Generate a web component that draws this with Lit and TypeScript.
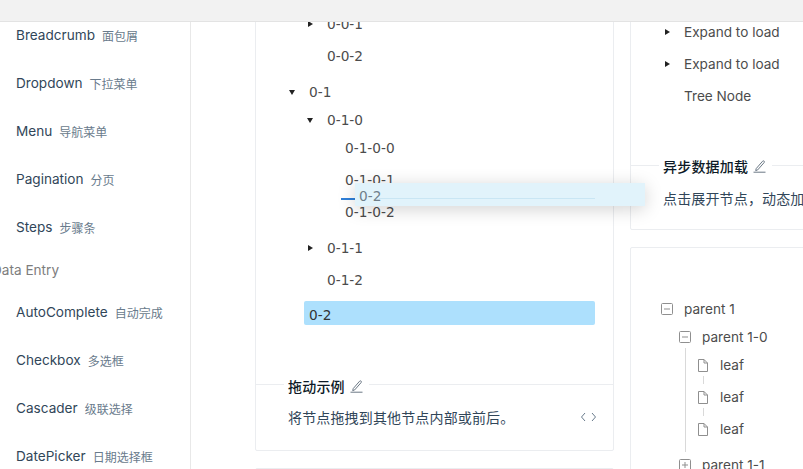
import { LitElement, css, html, svg } from "lit";
import { customElement } from "lit/decorators.js";

type TreeNode = { label: string; open?: boolean; selected?: boolean; kids?: TreeNode[]; leaf?: boolean };

const navTop = [
  ["Breadcrumb", "面包屑"],
  ["Dropdown", "下拉菜单"],
  ["Menu", "导航菜单"],
  ["Pagination", "分页"],
  ["Steps", "步骤条"],
];
const navEntry = [
  ["AutoComplete", "自动完成"],
  ["Checkbox", "多选框"],
  ["Cascader", "级联选择"],
  ["DatePicker", "日期选择框"],
];

const dragTree: TreeNode[] = [
  {
    label: "0-0",
    open: true,
    kids: [
      { label: "0-0-0" },
      { label: "0-0-1" },
      { label: "0-0-2", leaf: true },
    ],
  },
  {
    label: "0-1",
    open: true,
    kids: [
      {
        label: "0-1-0",
        open: true,
        kids: [
          { label: "0-1-0-0", leaf: true },
          { label: "0-1-0-1", leaf: true },
          { label: "0-1-0-2", leaf: true },
        ],
      },
      { label: "0-1-1" },
      { label: "0-1-2", leaf: true },
    ],
  },
  { label: "0-2", leaf: true, selected: true },
];

const asyncTree: TreeNode[] = [
  { label: "Expand to load" },
  { label: "Expand to load" },
  { label: "Tree Node", leaf: true },
];

const pencil = svg`<path d="M3.2 9.6 9.6 2.2c.5-.5 1.1-.5 1.5-.1s.4 1 0 1.5L4.7 10.9l-2 .7z" fill="none" stroke="currentColor"/><path d="M.5 13.2h12" stroke="currentColor"/>`;

@customElement("app-root")
export class AppRoot extends LitElement {
  static styles = css`
    :host {
      display: block;
      position: relative;
      width: 803px;
      height: 469px;
      overflow: hidden;
      background: #fff;
      font-family: Inter, "Noto Sans CJK SC", sans-serif;
      font-size: 13.6px;
      color: #314659;
    }
    * {
      box-sizing: border-box;
    }
    .topbar {
      height: 22px;
      background: #f2f2f2;
      border-bottom: 1px solid #e3e3e3;
      position: relative;
      z-index: 2;
    }
    .page {
      display: flex;
      height: 447px;
      overflow: hidden;
    }
    .side {
      flex: none;
      width: 191px;
      border-right: 1px solid #e8e8e8;
      margin-top: -11px;
    }
    .nav {
      display: flex;
      align-items: center;
      gap: 7px;
      height: 48px;
      padding-left: 16px;
      white-space: nowrap;
    }
    .nav small {
      font-size: 12px;
      color: #697b8c;
    }
    .group {
      height: 37px;
      line-height: 39px;
      margin-left: -8px;
      color: #7d7d7d;
    }
    .content {
      flex: none;
      display: flex;
      gap: 16px;
      padding-left: 64px;
      align-items: flex-start;
    }
    .col {
      flex: none;
      display: flex;
      flex-direction: column;
      gap: 17px;
      margin-top: -80px;
    }
    .left {
      width: 359px;
    }
    .right {
      width: 260px;
    }
    .card {
      border: 1px solid #ebedf0;
      border-radius: 2px;
    }
    .demo {
      padding: 5px 18px 52px 32px;
    }
    .async {
      padding: 73px 0 53px 32px;
    }
    .meta {
      position: relative;
      border-top: 1px solid #ebedf0;
      padding: 18px 18px 0 32px;
      height: 66px;
    }
    .right .meta {
      height: 64px;
    }
    .meta-title {
      position: absolute;
      top: -10px;
      left: 28px;
      display: flex;
      align-items: center;
      gap: 5px;
      padding: 0 6px 0 4px;
      background: #fff;
      font-family: "Noto Sans CJK SC", sans-serif;
      font-size: 14px;
      font-weight: 500;
      letter-spacing: 0.2px;
      line-height: 22px;
      color: #0d1a26;
    }
    .right .meta-title {
      top: -11px;
    }
    .meta-title svg {
      display: block;
      width: 13px;
      height: 14px;
      color: #6b7885;
    }
    .desc {
      display: flex;
      justify-content: space-between;
      align-items: center;
      font-family: "Noto Sans CJK SC", sans-serif;
      font-size: 14px;
      letter-spacing: 0.15px;
      line-height: 28px;
      white-space: nowrap;
    }
    .desc svg {
      display: block;
      width: 17px;
      height: 10px;
      color: #697b8c;
      margin-right: -2px;
    }
    ul {
      list-style: none;
      margin: 0;
      padding: 0;
    }
    ul ul {
      padding-left: 18px;
    }
    li {
      position: relative;
      padding: 4px 0;
    }
    .row {
      display: flex;
      height: 24px;
      align-items: center;
    }
    .sw {
      flex: none;
      width: 16px;
      display: flex;
      align-items: center;
    }
    .arrow-r {
      margin-left: 2px;
      width: 0;
      height: 0;
      border-left: 5px solid #222;
      border-top: 3.5px solid transparent;
      border-bottom: 3.5px solid transparent;
    }
    .arrow-d {
      margin-left: 1px;
      width: 0;
      height: 0;
      border-top: 5px solid #222;
      border-left: 3.5px solid transparent;
      border-right: 3.5px solid transparent;
    }
    .name {
      padding: 0 5px;
      line-height: 24px;
      border-radius: 2px;
      color: #4c4c4c;
      white-space: nowrap;
    }
    .num .name {
      font-family: "DejaVu Sans", sans-serif;
      font-size: 13.7px;
    }
    .name.selected {
      flex: 1;
      align-self: flex-start;
      height: 24px;
      margin-top: -3px;
      line-height: 28px;
      background: #ade0fd;
      color: #333;
    }
    .next {
      height: 60px;
    }
    .lined {
      padding: 45px 0 0 32px;
      height: 240px;
    }
    .lined .sw svg {
      display: block;
      width: 12px;
      height: 12px;
      margin-left: -2px;
      color: #8f8f8f;
    }
    .lined .sw .file {
      height: 13px;
    }
    .lined .vline::before {
      content: "";
      position: absolute;
      left: 3.5px;
      top: 27px;
      bottom: -3px;
      width: 1px;
      background: #d9d9d9;
    }
    .lined .tick::before {
      content: "";
      position: absolute;
      left: 3.5px;
      top: 27px;
      height: 8px;
      width: 1px;
      background: #d9d9d9;
    }
    .ghost {
      position: absolute;
      left: 355px;
      top: 183px;
      width: 290px;
      height: 23px;
      background: #e1f3fb;
      box-shadow: 0 3px 18px rgba(0, 0, 0, 0.18);
      display: flex;
      align-items: center;
      padding: 3px 0 0 4px;
      z-index: 1;
      font-family: "DejaVu Sans", sans-serif;
      font-size: 13.7px;
      color: #6f7f8a;
    }
    .ghost::after {
      content: "";
      position: absolute;
      left: 24px;
      right: 50px;
      top: 15px;
      height: 1px;
      background: #c9e6f4;
    }
    .drop {
      position: absolute;
      left: 341px;
      top: 198px;
      width: 14px;
      height: 2px;
      background: #2f7fd8;
      z-index: 1;
    }
  `;

  private nav(items: string[][]) {
    return items.map(
      ([en, zh]) => html`<div class="nav"><span>${en}</span><small>${zh}</small></div>`
    );
  }

  private tree(nodes: TreeNode[]): unknown {
    return html`<ul>
      ${nodes.map(
        (n) => html`<li>
          <div class="row">
            <span class="sw">
              ${n.leaf ? "" : html`<span class=${n.open ? "arrow-d" : "arrow-r"}></span>`}
            </span>
            <span class="name ${n.selected ? "selected" : ""}">${n.label}</span>
          </div>
          ${n.kids ? this.tree(n.kids) : ""}
        </li>`
      )}
    </ul>`;
  }

  private box(open: boolean) {
    return html`<svg viewBox="0 0 12 12" fill="none" stroke="currentColor">
      <rect x=".5" y=".5" width="11" height="11" rx="1" />
      <path d="M3 6h6" />
      ${open ? "" : svg`<path d="M6 3v6" />`}
    </svg>`;
  }

  private leaf(tick: boolean) {
    return html`<li class=${tick ? "tick" : ""}>
      <div class="row">
        <span class="sw">
          <svg class="file" viewBox="0 0 12 13" fill="none" stroke="currentColor">
            <path d="M1.5.5h5.5l3.5 3.5v8.5h-9zM7 .5v3.5h3.5" />
          </svg>
        </span>
        <span class="name">leaf</span>
      </div>
    </li>`;
  }

  render() {
    return html`
      <div class="topbar"></div>
      <div class="page">
        <aside class="side">
          ${this.nav(navTop)}
          <div class="group">Data Entry</div>
          ${this.nav(navEntry)}
        </aside>
        <main class="content">
          <div class="col left">
            <section class="card">
              <div class="demo num">${this.tree(dragTree)}</div>
              <div class="meta">
                <div class="meta-title">
                  拖动示例<svg viewBox="0 0 13 14">${pencil}</svg>
                </div>
                <div class="desc">
                  将节点拖拽到其他节点内部或前后。
                  <svg viewBox="0 0 17 10" fill="none" stroke="currentColor">
                    <path d="M5 1 1.5 5 5 9M12 1l3.5 4L12 9" />
                  </svg>
                </div>
              </div>
            </section>
            <section class="card next"></section>
          </div>
          <div class="col right">
            <section class="card">
              <div class="async">${this.tree(asyncTree)}</div>
              <div class="meta">
                <div class="meta-title">
                  异步数据加载<svg viewBox="0 0 13 14">${pencil}</svg>
                </div>
                <div class="desc">点击展开节点${"\uFF0C"}动态加载数据。</div>
              </div>
            </section>
            <section class="card lined">
              <ul>
                <li>
                  <div class="row">
                    <span class="sw">${this.box(true)}</span>
                    <span class="name">parent 1</span>
                  </div>
                  <ul>
                    <li class="vline">
                      <div class="row">
                        <span class="sw">${this.box(true)}</span>
                        <span class="name">parent 1-0</span>
                      </div>
                      <ul>
                        ${this.leaf(true)} ${this.leaf(true)} ${this.leaf(false)}
                      </ul>
                    </li>
                    <li>
                      <div class="row">
                        <span class="sw">${this.box(false)}</span>
                        <span class="name">parent 1-1</span>
                      </div>
                    </li>
                  </ul>
                </li>
              </ul>
            </section>
          </div>
        </main>
      </div>
      <div class="drop"></div>
      <div class="ghost">0-2</div>
    `;
  }
}
